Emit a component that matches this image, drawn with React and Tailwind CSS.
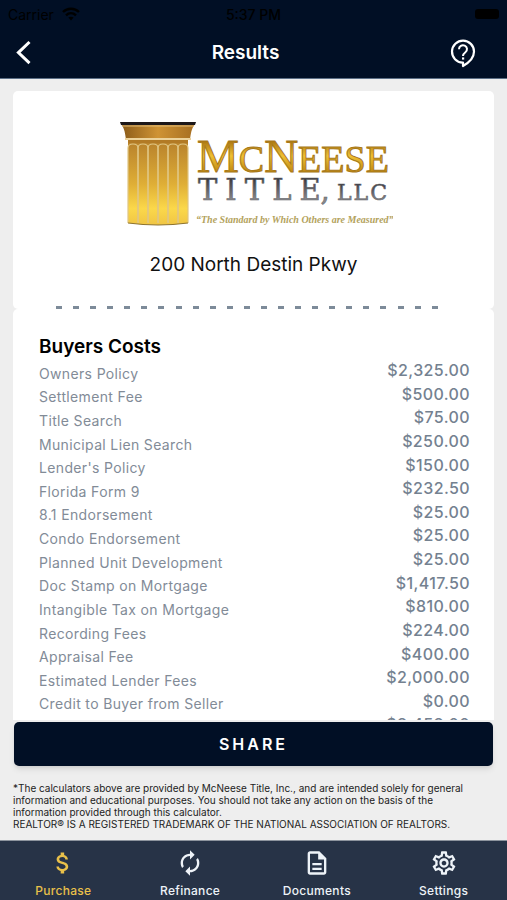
import React, { useState } from 'react';
import {
    MdAttachMoney,
    MdAutorenew,
    MdOutlineDescription,
    MdOutlineSettings,
} from 'react-icons/md';

const costs = [
    { label: 'Owners Policy', amount: '$2,325.00' },
    { label: 'Settlement Fee', amount: '$500.00' },
    { label: 'Title Search', amount: '$75.00' },
    { label: 'Municipal Lien Search', amount: '$250.00' },
    { label: "Lender's Policy", amount: '$150.00' },
    { label: 'Florida Form 9', amount: '$232.50' },
    { label: '8.1 Endorsement', amount: '$25.00' },
    { label: 'Condo Endorsement', amount: '$25.00' },
    { label: 'Planned Unit Development', amount: '$25.00' },
    { label: 'Doc Stamp on Mortgage', amount: '$1,417.50' },
    { label: 'Intangible Tax on Mortgage', amount: '$810.00' },
    { label: 'Recording Fees', amount: '$224.00' },
    { label: 'Appraisal Fee', amount: '$400.00' },
    { label: 'Estimated Lender Fees', amount: '$2,000.00' },
    { label: 'Credit to Buyer from Seller', amount: '$0.00' },
    { label: '', amount: '$8,458.00' },
];

const tabs = [
    { name: 'Purchase', Icon: MdAttachMoney },
    { name: 'Refinance', Icon: MdAutorenew },
    { name: 'Documents', Icon: MdOutlineDescription },
    { name: 'Settings', Icon: MdOutlineSettings },
];

const StatusBar = () => (
    <div className="grid grid-cols-3 items-center h-7 px-2 text-[14px] text-black">
        <div className="flex items-center gap-2">
            <span>Carrier</span>
            <svg viewBox="0 0 18 14" className="w-[18px] h-[14px]" fill="none" stroke="currentColor" strokeWidth="2.4">
                <path d="M1 5 C5.5 0.6 12.5 0.6 17 5" />
                <path d="M4 8.4 C7 5.6 11 5.6 14 8.4" />
                <path d="M6.4 10.6 C8 9.4 10 9.4 11.6 10.6 L9 13.4 Z" fill="currentColor" stroke="none" />
            </svg>
        </div>
        <span className="text-center font-medium">5:37 PM</span>
        <div className="justify-self-end w-6 h-[10px] rounded-[3px] bg-black" />
    </div>
);

const BackIcon = () => (
    <svg viewBox="0 0 26 26" className="w-[26px] h-[26px]" fill="none" stroke="currentColor" strokeWidth="3">
        <path d="M18.5 2 L7.4 12.6 L18.5 23.2" />
    </svg>
);

const HelpIcon = () => (
    <svg viewBox="0 0 28 30" className="w-7 h-[30px]" fill="none" stroke="currentColor" strokeWidth="2.2" strokeLinejoin="round">
        <path d="M14 24.6 H13.6 A11 11 0 1 1 25 13.6 C25 19.4 20.6 24.4 14 28 Z" />
        <path d="M10 11.2 A4 3.9 0 1 1 16.4 14.2 C14.8 15.4 14 16.2 14 18" strokeWidth="2" />
        <path d="M13 19.4 h2.2 v2.2 h-2.2 Z" fill="currentColor" stroke="none" />
    </svg>
);

const Header = () => (
    <header className="bg-[#010f25] border-b border-[#5c6f86]">
        <StatusBar />
        <div className="grid grid-cols-[48px_1fr_64px] items-center h-[50px] text-white">
            <button type="button" aria-label="Back" className="flex justify-center">
                <BackIcon />
            </button>
            <h1 className="text-center text-[19px] font-semibold">Results</h1>
            <button type="button" aria-label="Help" className="flex pl-[6px]">
                <HelpIcon />
            </button>
        </div>
    </header>
);

const flutes = [127, 137, 147, 157, 167, 177];

const Logo = () => (
    <svg viewBox="115 117 278 112" className="w-[278px] h-[112px]" role="img" aria-label="McNeese Title, LLC">
        <defs>
            <linearGradient id="shaft" x1="0" y1="0" x2="0" y2="1">
                <stop offset="0" stopColor="#b9832c" />
                <stop offset="0.5" stopColor="#dfae36" />
                <stop offset="0.8" stopColor="#fbd84a" />
                <stop offset="1" stopColor="#f0c544" />
            </linearGradient>
            <linearGradient id="capital" x1="0" y1="0" x2="1" y2="0">
                <stop offset="0" stopColor="#8a5a18" />
                <stop offset="0.5" stopColor="#cf9334" />
                <stop offset="1" stopColor="#a56d20" />
            </linearGradient>
            <linearGradient id="gold" x1="0" y1="0" x2="0" y2="1">
                <stop offset="0.2" stopColor="#a87310" />
                <stop offset="0.5" stopColor="#f0c033" />
                <stop offset="0.8" stopColor="#c08a14" />
            </linearGradient>
            <linearGradient id="steel" x1="0" y1="0" x2="0" y2="1">
                <stop offset="0.2" stopColor="#3c3c42" />
                <stop offset="0.8" stopColor="#8a8a8e" />
            </linearGradient>
        </defs>
        <path d="M128 143 H188 V223 Q158 227 128 223 Z" fill="url(#shaft)" />
        {flutes.map((x) => (
            <path
                key={x}
                d={`M${x + 1} 223 V148 Q${x + 1} 144 ${x + 6} 144 Q${x + 11} 144 ${x + 11} 148 V223`}
                fill="none"
                stroke="#e0c684"
                strokeWidth="1.2"
            />
        ))}
        <path d="M128 223 Q158 227 188 223" fill="none" stroke="#8d7330" strokeWidth="1.2" />
        <path d="M121 124 H195 C191 129 191 134 190 139 H126 C125 134 125 129 121 124 Z" fill="url(#capital)" />
        <path d="M125 138 H191 V140 H125 Z" fill="#ecd29a" />
        <path d="M128 140 H188 V143 H128 Z" fill="#b27a25" />
        <path d="M122 126 H194" stroke="#e2bd78" strokeWidth="1" />
        <path d="M120 122 H196 L195 125 H121 Z" fill="#1c1718" />
        <text x="197" y="172" fontFamily="Liberation Serif, serif" fontSize="47" fill="url(#gold)" stroke="#a87818" strokeWidth="1">
            M<tspan fontSize="38">C</tspan>N<tspan fontSize="38">EESE</tspan>
        </text>
        <text x="198" y="200" fontFamily="DejaVu Serif, serif" fontSize="29" fill="url(#steel)" stroke="#6a6a6e" strokeWidth="0.6">
            <tspan className="tracking-[8px]">TITL</tspan>E,
        </text>
        <text x="337" y="200" fontFamily="DejaVu Serif, serif" fontSize="22" fill="url(#steel)" stroke="#6a6a6e" strokeWidth="0.6" className="tracking-[2px]">LLC</text>
        <text x="196" y="223" fontFamily="Liberation Serif, serif" fontSize="10" fontStyle="italic" fontWeight="700" fill="#b3a25c">
            “The Standard by Which Others are Measured”
        </text>
    </svg>
);

const SummaryCard = () => (
    <section className="shrink-0 h-[218px] bg-white rounded-[5px] flex flex-col items-center pt-[26px]">
        <Logo />
        <p className="mt-[22px] text-[19px] leading-7 text-[#111]">200 North Destin Pkwy</p>
        <div className="mt-auto self-stretch flex justify-between pl-[43px] pr-[56px]">
            {Array.from({ length: 23 }, (_, i) => (
                <span key={i} className="w-[6px] h-[3px] bg-[#7d8b99]" />
            ))}
        </div>
    </section>
);

const CostsCard = () => (
    <section className="flex-1 min-h-0 overflow-hidden bg-white rounded-t-[5px] pl-[26px] pt-[25px] pr-6">
        <h2 className="text-[19px] leading-[26px] font-semibold text-black">Buyers Costs</h2>
        <table className="w-full h-[378px]">
            <tbody>
                {costs.map(({ label, amount }) => (
                    <tr key={amount + label}>
                        <th scope="row" className="p-0 text-left align-bottom text-[14px] leading-5 font-normal tracking-wide text-[#828b97]">
                            {label}
                        </th>
                        <td className="p-0 text-right align-top text-[16px] leading-5 font-medium tracking-wide text-[#748190]">
                            {amount}
                        </td>
                    </tr>
                ))}
            </tbody>
        </table>
    </section>
);

const TabBar = () => {
    const [active, setActive] = useState('Purchase');

    return (
        <nav className="grid grid-cols-4 h-[60px] bg-[#273347] border-t border-[#8d949e]">
            {tabs.map(({ name, Icon }) => (
                <button
                    key={name}
                    type="button"
                    onClick={() => setActive(name)}
                    className={`flex flex-col items-center pt-2 ${active === name ? 'text-[#e9c04a]' : 'text-[#eef3f8]'}`}
                >
                    <Icon className="w-7 h-7" />
                    <span className="mt-1 text-[12px] leading-5 font-medium tracking-wide">{name}</span>
                </button>
            ))}
        </nav>
    );
};

const App = () => (
    <div className="h-screen flex flex-col bg-[#eeeeee] font-['Inter','Liberation_Sans',sans-serif]">
        <Header />
        <main className="flex-1 min-h-0 flex flex-col px-[13px] pt-3">
            <SummaryCard />
            <CostsCard />
            <button
                type="button"
                className="shrink-0 mx-px mt-[2px] h-11 rounded-[5px] bg-[#010f25] text-white text-[16px] font-semibold tracking-[3px] shadow-md"
            >
                SHARE
            </button>
            <div className="pt-4 pr-3 pb-[10px] text-[10px] leading-[12px] text-[#222]">
                <p>
                    *The calculators above are provided by McNeese Title, Inc., and are intended solely for general
                    information and educational purposes. You should not take any action on the basis of the
                    information provided through this calculator.
                </p>
                <p>REALTOR® IS A REGISTERED TRADEMARK OF THE NATIONAL ASSOCIATION OF REALTORS.</p>
            </div>
        </main>
        <TabBar />
    </div>
);

export default App;
